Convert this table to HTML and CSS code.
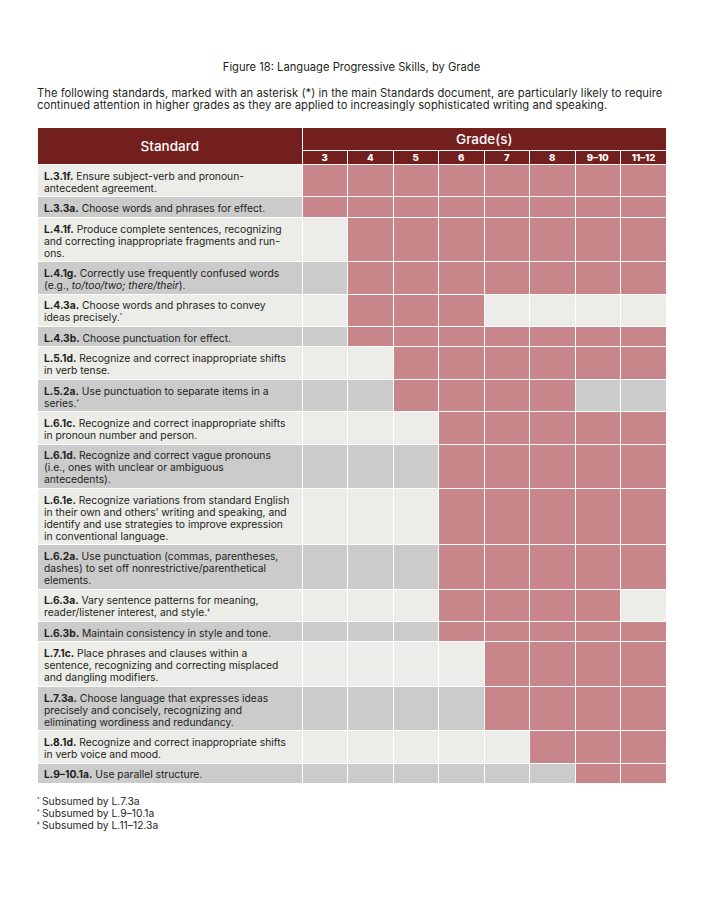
FILE: index.html
```html
<!DOCTYPE html>
<html lang="en">
<head>
<meta charset="utf-8">
<title>Figure 18: Language Progressive Skills, by Grade</title>
<link rel="stylesheet" href="styles.css">
</head>
<body>
<main class="page">
  <h1 class="title">Figure 18: Language Progressive Skills, by Grade</h1>
  <p class="intro">The following standards, marked with an asterisk (*) in the main Standards document, are particularly likely to require continued attention in higher grades as they are applied to increasingly sophisticated writing and speaking.</p>

  <table class="skills">
    <colgroup>
      <col class="c-std">
      <col class="c-g"><col class="c-g"><col class="c-g"><col class="c-g">
      <col class="c-g"><col class="c-g"><col class="c-g"><col class="c-g">
    </colgroup>
    <thead>
      <tr class="h1">
        <th rowspan="2" class="h-std">Standard</th>
        <th colspan="8" class="h-grades">Grade(s)</th>
      </tr>
      <tr class="h2">
        <th>3</th><th>4</th><th>5</th><th>6</th><th>7</th><th>8</th><th>9–10</th><th>11–12</th>
      </tr>
    </thead>
    <tbody>
      <tr class="lt"><td class="std"><b>L.3.1f.</b> Ensure subject-verb and pronoun-<br>antecedent agreement.</td><td class="f"></td><td class="f"></td><td class="f"></td><td class="f"></td><td class="f"></td><td class="f"></td><td class="f"></td><td class="f"></td></tr>
      <tr class="gy"><td class="std"><b>L.3.3a.</b> Choose words and phrases for effect.</td><td class="f"></td><td class="f"></td><td class="f"></td><td class="f"></td><td class="f"></td><td class="f"></td><td class="f"></td><td class="f"></td></tr>
      <tr class="lt"><td class="std"><b>L.4.1f.</b> Produce complete sentences, recognizing<br>and correcting inappropriate fragments and run-<br>ons.</td><td></td><td class="f"></td><td class="f"></td><td class="f"></td><td class="f"></td><td class="f"></td><td class="f"></td><td class="f"></td></tr>
      <tr class="gy"><td class="std"><b>L.4.1g.</b> Correctly use frequently confused words<br>(e.g., <i>to/too/two; there/their</i>).</td><td></td><td class="f"></td><td class="f"></td><td class="f"></td><td class="f"></td><td class="f"></td><td class="f"></td><td class="f"></td></tr>
      <tr class="lt"><td class="std"><b>L.4.3a.</b> Choose words and phrases to convey<br>ideas precisely.<sup>*</sup></td><td></td><td class="f"></td><td class="f"></td><td class="f"></td><td></td><td></td><td></td><td></td></tr>
      <tr class="gy"><td class="std"><b>L.4.3b.</b> Choose punctuation for effect.</td><td></td><td class="f"></td><td class="f"></td><td class="f"></td><td class="f"></td><td class="f"></td><td class="f"></td><td class="f"></td></tr>
      <tr class="lt"><td class="std"><b>L.5.1d.</b> Recognize and correct inappropriate shifts<br>in verb tense.</td><td></td><td></td><td class="f"></td><td class="f"></td><td class="f"></td><td class="f"></td><td class="f"></td><td class="f"></td></tr>
      <tr class="gy"><td class="std"><b>L.5.2a.</b> Use punctuation to separate items in a<br>series.<sup>†</sup></td><td></td><td></td><td class="f"></td><td class="f"></td><td class="f"></td><td class="f"></td><td></td><td></td></tr>
      <tr class="lt"><td class="std"><b>L.6.1c.</b> Recognize and correct inappropriate shifts<br>in pronoun number and person.</td><td></td><td></td><td></td><td class="f"></td><td class="f"></td><td class="f"></td><td class="f"></td><td class="f"></td></tr>
      <tr class="gy"><td class="std"><b>L.6.1d.</b> Recognize and correct vague pronouns<br>(i.e., ones with unclear or ambiguous<br>antecedents).</td><td></td><td></td><td></td><td class="f"></td><td class="f"></td><td class="f"></td><td class="f"></td><td class="f"></td></tr>
      <tr class="lt"><td class="std"><b>L.6.1e.</b> Recognize variations from standard English<br>in their own and others’ writing and speaking, and<br>identify and use strategies to improve expression<br>in conventional language.</td><td></td><td></td><td></td><td class="f"></td><td class="f"></td><td class="f"></td><td class="f"></td><td class="f"></td></tr>
      <tr class="gy"><td class="std"><b>L.6.2a.</b> Use punctuation (commas, parentheses,<br>dashes) to set off nonrestrictive/parenthetical<br>elements.</td><td></td><td></td><td></td><td class="f"></td><td class="f"></td><td class="f"></td><td class="f"></td><td class="f"></td></tr>
      <tr class="lt"><td class="std"><b>L.6.3a.</b> Vary sentence patterns for meaning,<br>reader/listener interest, and style.<sup>‡</sup></td><td></td><td></td><td></td><td class="f"></td><td class="f"></td><td class="f"></td><td class="f"></td><td></td></tr>
      <tr class="gy"><td class="std"><b>L.6.3b.</b> Maintain consistency in style and tone.</td><td></td><td></td><td></td><td class="f"></td><td class="f"></td><td class="f"></td><td class="f"></td><td class="f"></td></tr>
      <tr class="lt"><td class="std"><b>L.7.1c.</b> Place phrases and clauses within a<br>sentence, recognizing and correcting misplaced<br>and dangling modifiers.</td><td></td><td></td><td></td><td></td><td class="f"></td><td class="f"></td><td class="f"></td><td class="f"></td></tr>
      <tr class="gy"><td class="std"><b>L.7.3a.</b> Choose language that expresses ideas<br>precisely and concisely, recognizing and<br>eliminating wordiness and redundancy.</td><td></td><td></td><td></td><td></td><td class="f"></td><td class="f"></td><td class="f"></td><td class="f"></td></tr>
      <tr class="lt"><td class="std"><b>L.8.1d.</b> Recognize and correct inappropriate shifts<br>in verb voice and mood.</td><td></td><td></td><td></td><td></td><td></td><td class="f"></td><td class="f"></td><td class="f"></td></tr>
      <tr class="gy"><td class="std"><b>L.9–10.1a.</b> Use parallel structure.</td><td></td><td></td><td></td><td></td><td></td><td></td><td class="f"></td><td class="f"></td></tr>
    </tbody>
  </table>

  <ul class="notes">
    <li><sup>*</sup>Subsumed by L.7.3a</li>
    <li><sup>†</sup>Subsumed by L.9–10.1a</li>
    <li><sup>‡</sup>Subsumed by L.11–12.3a</li>
  </ul>
</main>
</body>
</html>
```

FILE: styles.css
```css
html, body {
  margin: 0;
  padding: 0;
  background: #ffffff;
}

body {
  font-family: "Inter", "DejaVu Sans", sans-serif;
  color: #231f20;
}

.page {
  width: 629px;
  padding: 61px 0 0 37px;
}

.title {
  margin: 0;
  font-size: 11.2px;
  line-height: 12px;
  font-weight: 400;
  text-align: center;
}

.intro {
  margin: 14px 0 0;
  font-size: 11.2px;
  line-height: 12px;
  letter-spacing: 0.05px;
}

.skills {
  margin: 17px 0 0 1px;
  width: 628px;
  table-layout: fixed;
  border-collapse: collapse;
}

.c-std { width: 264px; }
.c-g { width: 45.5px; }

.skills th {
  background: #731f1e;
  color: #ffffff;
  border: 1px solid #ffffff;
  padding: 0;
}

.skills thead tr:first-child th { border-top: none; }
.skills th:first-child { border-left: none; }
.skills th:last-child, .skills td:last-child { border-right: none; }

.h-std {
  font-size: 13.5px;
  font-weight: 500;
  line-height: 18px;
}

.h-grades {
  font-size: 13.5px;
  font-weight: 500;
  height: 22px;
  line-height: 14px;
}

.h2 th {
  font-size: 9.6px;
  font-weight: 800;
  height: 13px;
  line-height: 12px;
}

.skills td {
  border: 1px solid #ffffff;
  padding: 0;
}

.skills td:first-child { border-left: none; }

.skills td.std {
  font-size: 10.3px;
  line-height: 12px;
  padding: 4.8px 2px 2.6px 6px;
  vertical-align: top;
}

.std b { font-weight: 700; }

.lt td { background: #ecece8; }
.gy td { background: #cbcbcb; }
.skills td.f { background: #c8868a; }

sup {
  font-size: 5px;
  line-height: 0;
  vertical-align: 4px;
}

.notes {
  list-style: none;
  margin: 11px 0 0;
  padding: 0;
  font-size: 10.3px;
  line-height: 12px;
}

.notes sup {
  display: inline-block;
  width: 5px;
}
```
